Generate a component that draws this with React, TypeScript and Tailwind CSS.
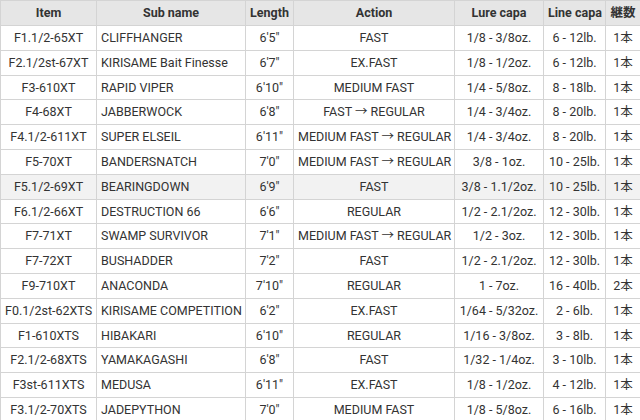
const rows = [
  ["F1.1/2-65XT", "CLIFFHANGER", "6'5\"", "FAST", "1/8 - 3/8oz.", "6 - 12lb.", "1本"],
  ["F2.1/2st-67XT", "KIRISAME Bait Finesse", "6'7\"", "EX.FAST", "1/8 - 1/2oz.", "6 - 12lb.", "1本"],
  ["F3-610XT", "RAPID VIPER", "6'10\"", "MEDIUM FAST", "1/4 - 5/8oz.", "8 - 18lb.", "1本"],
  ["F4-68XT", "JABBERWOCK", "6'8\"", "FAST → REGULAR", "1/4 - 3/4oz.", "8 - 20lb.", "1本"],
  ["F4.1/2-611XT", "SUPER ELSEIL", "6'11\"", "MEDIUM FAST → REGULAR", "1/4 - 3/4oz.", "8 - 20lb.", "1本"],
  ["F5-70XT", "BANDERSNATCH", "7'0\"", "MEDIUM FAST → REGULAR", "3/8 - 1oz.", "10 - 25lb.", "1本"],
  ["F5.1/2-69XT", "BEARINGDOWN", "6'9\"", "FAST", "3/8 - 1.1/2oz.", "10 - 25lb.", "1本"],
  ["F6.1/2-66XT", "DESTRUCTION 66", "6'6\"", "REGULAR", "1/2 - 2.1/2oz.", "12 - 30lb.", "1本"],
  ["F7-71XT", "SWAMP SURVIVOR", "7'1\"", "MEDIUM FAST → REGULAR", "1/2 - 3oz.", "12 - 30lb.", "1本"],
  ["F7-72XT", "BUSHADDER", "7'2\"", "FAST", "1/2 - 2.1/2oz.", "12 - 30lb.", "1本"],
  ["F9-710XT", "ANACONDA", "7'10\"", "REGULAR", "1 - 7oz.", "16 - 40lb.", "2本"],
  ["F0.1/2st-62XTS", "KIRISAME COMPETITION", "6'2\"", "EX.FAST", "1/64 - 5/32oz.", "2 - 6lb.", "1本"],
  ["F1-610XTS", "HIBAKARI", "6'10\"", "REGULAR", "1/16 - 3/8oz.", "3 - 8lb.", "1本"],
  ["F2.1/2-68XTS", "YAMAKAGASHI", "6'8\"", "FAST", "1/32 - 1/4oz.", "3 - 10lb.", "1本"],
  ["F3st-611XTS", "MEDUSA", "6'11\"", "EX.FAST", "1/8 - 1/2oz.", "4 - 12lb.", "1本"],
  ["F3.1/2-70XTS", "JADEPYTHON", "7'0\"", "MEDIUM FAST", "1/8 - 5/8oz.", "6 - 16lb.", "1本"],
];

const headers = ["Item", "Sub name", "Length", "Action", "Lure capa", "Line capa", "継数"];
const widths = ["w-[96px]", "w-[149px]", "w-[48px]", "w-[161px]", "w-[89px]", "w-[62px]", "w-[35px]"];

export default function App() {
  return (
    <div className="w-[640px] h-[420px] overflow-hidden bg-white">
      <table
        className="w-[641px] table-fixed border-collapse text-[12.5px] text-[#333]"
        style={{ fontFamily: "Roboto, 'Noto Sans CJK JP', sans-serif" }}
      >
        <colgroup>
          {widths.map((w, i) => (
            <col key={i} className={w} />
          ))}
        </colgroup>
        <thead>
          <tr className="h-[25px] bg-[#e6e6e6]">
            {headers.map((h) => (
              <th key={h} className="border border-[#d4d4d4] px-1 pt-px text-center font-bold whitespace-nowrap">
                {h}
              </th>
            ))}
          </tr>
        </thead>
        <tbody>
          {rows.map((r, i) => (
            <tr key={r[0]} className={`h-[24.8px] ${i === 6 ? "bg-[#f2f2f2]" : "bg-white"}`}>
              {r.map((c, j) => (
                <td
                  key={j}
                  className={`border border-[#d4d4d4] pt-px whitespace-nowrap ${
                    j === 1 ? "pl-[4px] text-left" : "px-1 text-center"
                  }`}
                >
                  {c}
                </td>
              ))}
            </tr>
          ))}
        </tbody>
      </table>
    </div>
  );
}
